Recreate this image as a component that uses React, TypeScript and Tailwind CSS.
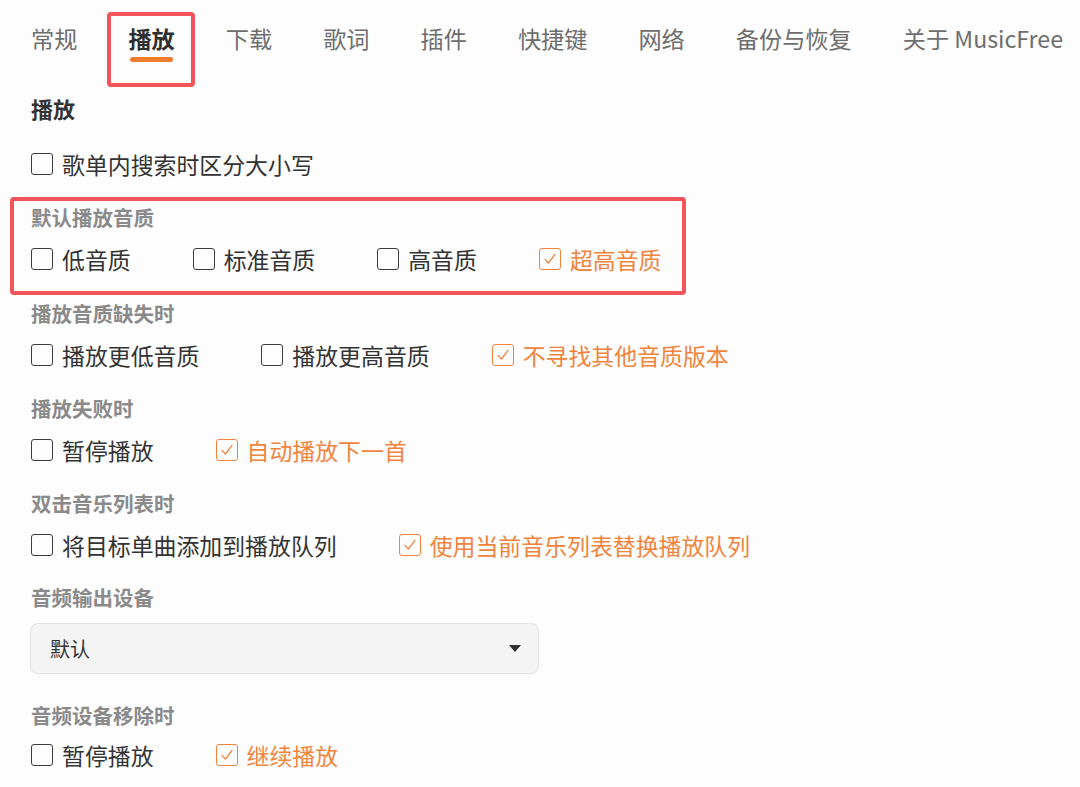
import React from 'react';

const ORANGE = '#f0843c';

const tabs = ['常规', '播放', '下载', '歌词', '插件', '快捷键', '网络', '备份与恢复', '关于 MusicFree'];

function CheckBox({ checked }: { checked?: boolean }) {
  if (checked) {
    return (
      <span className="w-[22px] h-[22px] rounded-[3px] border-[1.5px] border-[#f0843c] flex items-center justify-center shrink-0">
        <svg width="16" height="16" viewBox="0 0 16 16" fill="none">
          <path d="M3 8.4 L6.4 12 L13 3.4" stroke={ORANGE} strokeWidth="1.3" strokeLinecap="round" strokeLinejoin="round" />
        </svg>
      </span>
    );
  }
  return <span className="w-[22px] h-[22px] rounded-[3px] border-[1.7px] border-[#3c3c3c] shrink-0" />;
}

function Option({ label, checked }: { label: string; checked?: boolean }) {
  return (
    <label className="flex items-center gap-[9px] h-[32px] cursor-pointer">
      <CheckBox checked={checked} />
      <span className={`text-[22.9px] leading-[32px] ${checked ? 'text-[#f0843c]' : 'text-[#333333]'}`}>{label}</span>
    </label>
  );
}

function Group({ title, options, className = '', gap = 'mt-[12px]' }: { title: string; options: { label: string; checked?: boolean }[]; className?: string; gap?: string }) {
  return (
    <div className={className}>
      <div className="text-[20.5px] leading-[28px] font-bold text-[#8a8a8a]">{title}</div>
      <div className={`${gap} flex items-center gap-[62px]`}>
        {options.map(o => (
          <Option key={o.label} label={o.label} checked={o.checked} />
        ))}
      </div>
    </div>
  );
}

export default function App() {
  return (
    <div
      className="relative w-[1080px] h-[787px] overflow-hidden bg-[#fdfdfd]"
      style={{ fontFamily: '"Noto Sans CJK SC", "Noto Sans", sans-serif' }}
    >
      <div className="pl-[31px]">
        {/* Tabs */}
        <nav className="pt-[22px] flex items-start gap-[51px]">
          {tabs.map(t => {
            const active = t === '播放';
            return (
              <div key={t} className="flex flex-col items-center">
                <span className={`text-[23.2px] leading-[32px] whitespace-nowrap ${active ? 'font-bold text-[#2f2f2f]' : 'text-[#6e6e6e]'}`}>{t}</span>
                <span className={`mt-[3px] h-[5px] w-[43px] rounded-full ${active ? 'bg-[#f07d2e]' : 'bg-transparent'}`} />
              </div>
            );
          })}
        </nav>

        <h2 className="mt-[31px] text-[22px] leading-[30px] font-bold text-[#333333]">播放</h2>

        <div className="mt-[25px]">
          <Option label="歌单内搜索时区分大小写" />
        </div>

        <Group
          className="mt-[23px]"
          title="默认播放音质"
          options={[{ label: '低音质' }, { label: '标准音质' }, { label: '高音质' }, { label: '超高音质', checked: true }]}
        />
        <Group
          className="mt-[24px]"
          title="播放音质缺失时"
          options={[{ label: '播放更低音质' }, { label: '播放更高音质' }, { label: '不寻找其他音质版本', checked: true }]}
        />
        <Group
          className="mt-[23px]"
          title="播放失败时"
          options={[{ label: '暂停播放' }, { label: '自动播放下一首', checked: true }]}
        />
        <Group
          className="mt-[23px]"
          title="双击音乐列表时"
          options={[{ label: '将目标单曲添加到播放队列' }, { label: '使用当前音乐列表替换播放队列', checked: true }]}
        />

        <div className="mt-[22px]">
          <div className="text-[20.5px] leading-[28px] font-bold text-[#8a8a8a]">音频输出设备</div>
          <div className="mt-[12px] -ml-[1px] w-[509px] h-[51px] rounded-[8px] border border-[#e2e2e2] bg-[#f4f4f4] flex items-center justify-between pl-[19px] pr-[17px]">
            <span className="text-[20px] text-[#333333]">默认</span>
            <svg width="12" height="7" viewBox="0 0 12 7">
              <path d="M0 0 H12 L6 7 Z" fill="#2f2f2f" />
            </svg>
          </div>
        </div>

        <Group
          className="mt-[27px]"
          gap="mt-[10px]"
          title="音频设备移除时"
          options={[{ label: '暂停播放' }, { label: '继续播放', checked: true }]}
        />
      </div>

      {/* annotation boxes */}
      <div className="absolute left-[107px] top-[12px] w-[88px] h-[75px] border-[4px] border-[#f2545b] rounded-[4px] pointer-events-none" />
      <div className="absolute left-[10px] top-[197px] w-[676px] h-[98px] border-[4px] border-[#f2545b] rounded-[4px] pointer-events-none" />
    </div>
  );
}
